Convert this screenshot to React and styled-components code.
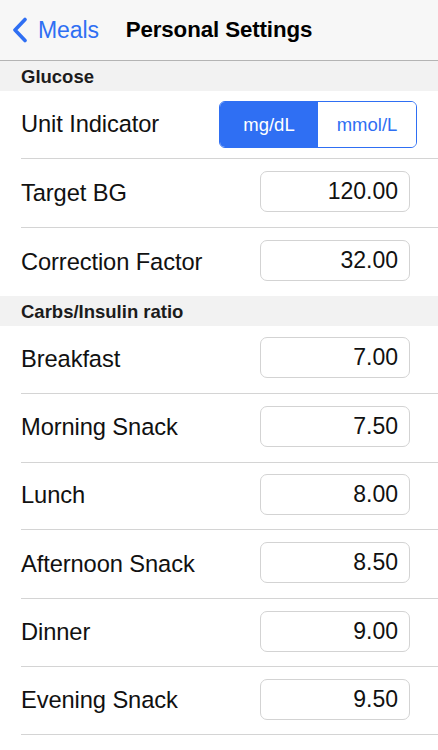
import React from "react";
import styled, { createGlobalStyle } from "styled-components";

const Global = createGlobalStyle`
  html, body { margin: 0; padding: 0; background: #ffffff; }
  body { font-family: "Liberation Sans", Arial, Helvetica, sans-serif; -webkit-font-smoothing: antialiased; }
  * { box-sizing: border-box; }
`;

const BLUE = "#2f6ff3";

const Screen = styled.div`
  width: 438px;
  height: 750px;
  background: #ffffff;
  overflow: hidden;
  display: flex;
  flex-direction: column;
`;

const NavBar = styled.header`
  height: 61px;
  flex: none;
  background: #f7f7f7;
  border-bottom: 1px solid #b4b4b4;
  display: grid;
  grid-template-columns: 1fr auto 1fr;
  align-items: center;
`;

const BackButton = styled.div`
  display: flex;
  align-items: center;
  gap: 10px;
  padding-left: 11px;
  color: ${BLUE};
  font-size: 23px;
  letter-spacing: -0.1px;
`;

const Title = styled.div`
  font-size: 22.3px;
  font-weight: 700;
  color: #000;
  letter-spacing: -0.1px;
`;

const SectionHeader = styled.div`
  height: 30px;
  flex: none;
  background: #f2f2f2;
  display: flex;
  align-items: center;
  padding: 2px 0 0 21px;
  font-size: 18.5px;
  font-weight: 700;
  color: #1c1c1c;
`;

const Row = styled.div`
  flex: none;
  padding-left: 21px;
  background: #fff;
`;

const RowInner = styled.div`
  height: ${(p) => p.$h}px;
  display: flex;
  align-items: center;
  justify-content: space-between;
  padding-right: ${(p) => (p.$seg ? 21 : 28)}px;
  border-bottom: ${(p) => (p.$last ? "none" : "1px solid #d4d4d4")};
`;

const Label = styled.span`
  font-size: 23.7px;
  color: #111;
  letter-spacing: -0.1px;
`;

const ValueBox = styled.div`
  width: 150px;
  height: 41px;
  margin-bottom: 3px;
  border: 1px solid #d3d3d3;
  border-radius: 7px;
  display: flex;
  align-items: center;
  justify-content: flex-end;
  padding-right: 11px;
  font-size: 23px;
  color: #111;
`;

const Segmented = styled.div`
  width: 198px;
  height: 47px;
  display: grid;
  grid-template-columns: 1fr 1fr;
  border: 1.5px solid ${BLUE};
  border-radius: 6px;
  overflow: hidden;
`;

const Segment = styled.div`
  display: flex;
  align-items: center;
  justify-content: center;
  font-size: 18.5px;
  background: ${(p) => (p.$active ? BLUE : "#fff")};
  color: ${(p) => (p.$active ? "#fff" : BLUE)};
`;

const Chevron = () => (
  <svg width="17" height="26" viewBox="0 0 17 26">
    <path d="M14 2.5 L4 13 L14 23.5" fill="none" stroke={BLUE} strokeWidth="3.6" strokeLinecap="round" strokeLinejoin="round" />
  </svg>
);

const SettingRow = ({ label, value, h, last }) => (
  <Row>
    <RowInner $h={h} $last={last}>
      <Label>{label}</Label>
      <ValueBox>{value}</ValueBox>
    </RowInner>
  </Row>
);

const ratios = [
  ["Breakfast", "7.00", 67.6],
  ["Morning Snack", "7.50", 69],
  ["Lunch", "8.00", 67.7],
  ["Afternoon Snack", "8.50", 69],
  ["Dinner", "9.00", 67.7],
  ["Evening Snack", "9.50", 68.3],
];

export default function App() {
  return (
    <>
      <Global />
      <Screen>
        <NavBar>
          <BackButton>
            <Chevron />
            <span>Meals</span>
          </BackButton>
          <Title>Personal Settings</Title>
          <div />
        </NavBar>
        <SectionHeader>Glucose</SectionHeader>
        <Row>
          <RowInner $h={68} $seg>
            <Label>Unit Indicator</Label>
            <Segmented>
              <Segment $active>mg/dL</Segment>
              <Segment>mmol/L</Segment>
            </Segmented>
          </RowInner>
        </Row>
        <SettingRow label="Target BG" value="120.00" h={69} />
        <SettingRow label="Correction Factor" value="32.00" h={68} last />
        <SectionHeader>Carbs/Insulin ratio</SectionHeader>
        {ratios.map(([l, v, h]) => (
          <SettingRow key={l} label={l} value={v} h={h} />
        ))}
      </Screen>
    </>
  );
}
